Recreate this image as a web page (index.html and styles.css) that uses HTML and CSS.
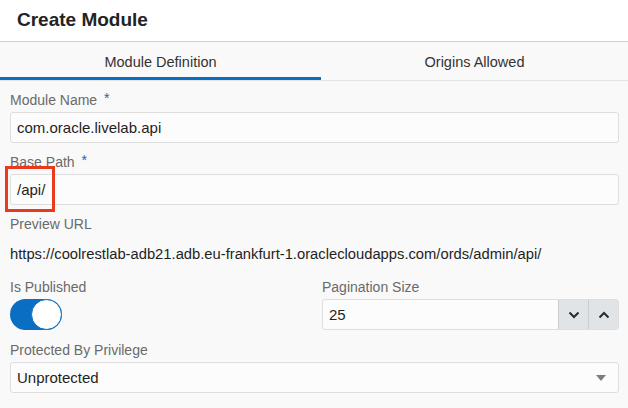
FILE: index.html
```html
<!DOCTYPE html>
<html lang="en">
<head>
<meta charset="utf-8">
<title>Create Module</title>
<link rel="stylesheet" href="styles.css">
</head>
<body>
<div class="dialog">
  <header class="dlg-header">
    <h1 class="dlg-title">Create Module</h1>
  </header>
  <nav class="tabs">
    <div class="tab tab-active">Module Definition</div>
    <div class="tab">Origins Allowed</div>
  </nav>
  <form class="form">
    <div class="field">
      <label class="label">Module Name <span class="req">*</span></label>
      <div class="input">com.oracle.livelab.api</div>
    </div>
    <div class="field field-marked">
      <label class="label">Base Path <span class="req">*</span></label>
      <div class="input">/api/</div>
      <div class="highlight"></div>
    </div>
    <div class="field">
      <label class="label label-url">Preview URL</label>
      <div class="display">https://coolrestlab-adb21.adb.eu-frankfurt-1.oraclecloudapps.com/ords/admin/api/</div>
    </div>
    <div class="row">
      <div class="field">
        <label class="label">Is Published</label>
        <div class="switch"><span class="knob"></span></div>
      </div>
      <div class="field">
        <label class="label">Pagination Size</label>
        <div class="number">
          <div class="number-value">25</div>
          <button type="button" class="spin">
            <svg width="12" height="8" viewBox="0 0 12 8"><path d="M1.5 1.5 L6 6 L10.5 1.5" fill="none" stroke="#2b2b2b" stroke-width="2"/></svg>
          </button>
          <button type="button" class="spin">
            <svg width="12" height="8" viewBox="0 0 12 8"><path d="M1.5 6.5 L6 2 L10.5 6.5" fill="none" stroke="#2b2b2b" stroke-width="2"/></svg>
          </button>
        </div>
      </div>
    </div>
    <div class="field">
      <label class="label">Protected By Privilege</label>
      <div class="input select">
        <span>Unprotected</span>
        <svg class="caret" width="10" height="6" viewBox="0 0 10 6"><path d="M0 0 H10 L5 6 Z" fill="#7d7d7d"/></svg>
      </div>
    </div>
    <div class="field field-next">
      <label class="label">Comments</label>
    </div>
  </form>
</div>
</body>
</html>
```

FILE: styles.css
```css
* { box-sizing: border-box; }
html, body { margin: 0; padding: 0; }
body {
  background: #f9f9f9;
  font-family: "Liberation Sans", Arial, sans-serif;
  color: #1f1f1f;
  width: 628px;
  height: 408px;
  overflow: hidden;
}
.dlg-header {
  background: #ffffff;
  height: 42px;
  border-bottom: 1px solid #cfcfcf;
  padding-left: 17px;
}
.dlg-title {
  margin: 0;
  font-size: 19px;
  font-weight: bold;
  line-height: 40px;
  color: #232323;
}
.tabs {
  display: flex;
  height: 39px;
  border-bottom: 1px solid #e3e3e3;
  background: #f9f9f9;
}
.tab {
  flex: 1;
  text-align: center;
  font-size: 14.5px;
  color: #333;
  line-height: 40px;
  border-bottom: 3px solid transparent;
  height: 38px;
}
.tab-active {
  flex: 0 0 321px;
  border-bottom-color: #0a6fc2;
}
.form {
  padding: 9px 9px 0 10px;
}
.field {
  margin-bottom: 9px;
  position: relative;
}
.label {
  display: block;
  font-size: 14px;
  line-height: 21px;
  height: 21px;
  color: #6a6a6a;
  margin-bottom: 1px;
}
.label-url { margin-top: 1px; }
.req {
  color: #1e64a8;
  margin-left: 3px;
  position: relative;
  top: -2px;
}
.input {
  height: 31px;
  border: 1px solid #dedede;
  border-radius: 3px;
  background: #fcfcfc;
  padding: 0 6px;
  font-size: 15px;
  line-height: 29px;
  color: #1f1f1f;
}
.highlight {
  position: absolute;
  left: -5px;
  top: 14px;
  width: 50px;
  height: 46px;
  border: 3px solid #ea3a1e;
}
.display {
  height: 31px;
  margin-top: 4px;
  font-size: 14.75px;
  line-height: 31px;
  color: #1f1f1f;
}
.row {
  display: grid;
  grid-template-columns: 1fr 1fr;
  column-gap: 15px;
  margin-top: -2px;
}
.row .field { margin-bottom: 10px; }
.switch {
  width: 52px;
  height: 31px;
  border-radius: 16px;
  background: #0a6fc2;
  display: flex;
  justify-content: flex-end;
}
.knob {
  width: 31px;
  height: 31px;
  border-radius: 50%;
  background: #ffffff;
  border: 1.5px solid #0a6fc2;
}
.number {
  display: flex;
  height: 31px;
  border: 1px solid #dedede;
  border-radius: 3px;
  background: #fcfcfc;
  overflow: hidden;
}
.number-value {
  flex: 1;
  padding: 0 6px;
  font-size: 15px;
  line-height: 29px;
}
.spin {
  width: 30px;
  height: 29px;
  border: 0;
  border-left: 1px solid #c8cdd1;
  background: #e0e4e7;
  padding: 0;
  display: flex;
  align-items: center;
  justify-content: center;
}
.select {
  display: flex;
  align-items: center;
  justify-content: space-between;
  padding-right: 12px;
}
.caret { display: block; }
.field-next { margin-top: 12px; }
```
